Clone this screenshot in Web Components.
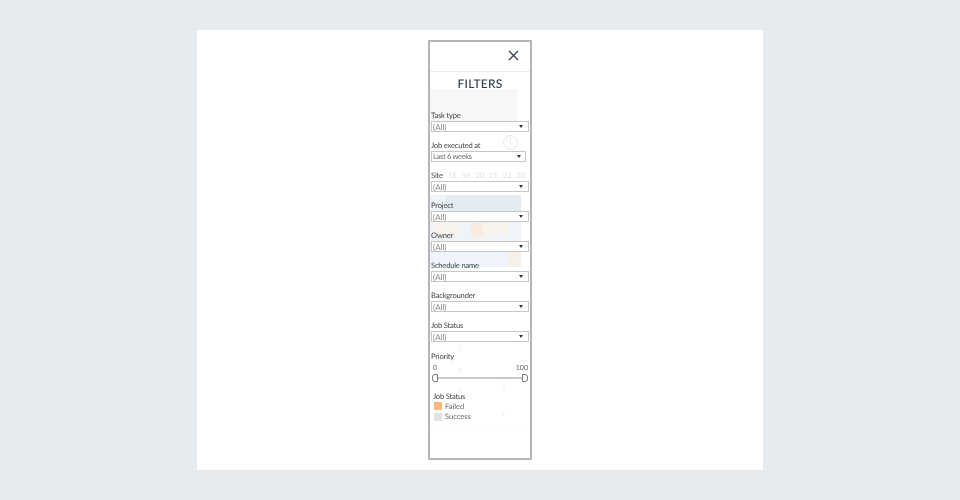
<!DOCTYPE html>
<html>
<head>
<meta charset="utf-8">
<style>
  html, body { margin: 0; height: 500px; overflow: hidden; background: #e6ebef; }
  body { font-family: Lato, "Open Sans", sans-serif; text-rendering: geometricPrecision; }
</style>
</head>
<body>
<dash-page>
  <filter-panel>
    <filter-select label="Task type" value="(All)"></filter-select>
    <filter-select label="Job executed at" value="Last 6 weeks" narrow></filter-select>
    <filter-select label="Site" value="(All)"></filter-select>
    <filter-select label="Project" value="(All)"></filter-select>
    <filter-select label="Owner" value="(All)"></filter-select>
    <filter-select label="Schedule name" value="(All)"></filter-select>
    <filter-select label="Backgrounder" value="(All)"></filter-select>
    <filter-select label="Job Status" value="(All)"></filter-select>
    <range-filter label="Priority" min="0" max="100"></range-filter>
    <status-legend title="Job Status"></status-legend>
  </filter-panel>
</dash-page>

<script>
class DashPage extends HTMLElement {
  constructor() {
    super();
    this.attachShadow({ mode: 'open' });
    this.shadowRoot.innerHTML = `
      <style>
        :host { display: flex; justify-content: center; padding: 30px 0; height: 440px; }
        .sheet { width: 566px; height: 440px; background: #fff; display: flex; justify-content: center; padding-top: 10px; box-sizing: border-box; }
      </style>
      <div class="sheet"><slot></slot></div>
    `;
  }
}

class FilterPanel extends HTMLElement {
  constructor() {
    super();
    this.attachShadow({ mode: 'open' });
    this.shadowRoot.innerHTML = `
      <style>
        :host { display: block; position: relative; width: 104px; height: 420px; box-sizing: border-box; border: 2px solid #b4b6b8; background: #fff; overflow: hidden; }
        .wrap { filter: blur(0.3px); height: 100%; }
        .head { height: 30px; border-bottom: 1px solid #ededed; display: flex; justify-content: flex-end; align-items: center; padding: 0 11px 2px 0; box-sizing: border-box; }
        .title { text-align: center; font-size: 12px; font-weight: 500; line-height: 15px; color: #2f3d4c; letter-spacing: .2px; padding-top: 4px; position: relative; }
        .list { position: relative; display: flex; flex-direction: column; gap: 10px; padding: 0 1px; margin-top: 19px; }
        /* faded chart showing through behind the filters */
        .ghost { position: absolute; }
        .days { position: absolute; left: 18px; top: 129px; display: flex; gap: 5px; font-size: 7.5px; line-height: 10px; color: #e2e2e2; }
        .info { position: absolute; left: 73px; top: 93px; width: 13px; height: 13px; border: 1px solid #e4e4e4; border-radius: 50%; color: #e4e4e4; font-size: 10px; line-height: 13px; text-align: center; }
      </style>
      <div class="wrap">
        <div class="ghost" style="left:0;top:47px;width:88px;height:33px;background:#f7f7f7"></div>
        <div class="ghost" style="left:0;top:153px;width:91px;height:72px;background:#eef4f9"></div>
        <div class="ghost" style="left:16px;top:153px;width:75px;height:20px;background:#e3ebf3"></div>
        <div class="ghost" style="left:4px;top:181px;width:25px;height:14px;background:#f8f2ed"></div>
        <div class="ghost" style="left:41px;top:181px;width:12px;height:14px;background:#f9ebe0"></div>
        <div class="ghost" style="left:53px;top:181px;width:25px;height:14px;background:#f8f2ed"></div>
        <div class="ghost" style="left:78px;top:210px;width:13px;height:15px;background:#f6f0ea"></div>
        <div class="ghost" style="left:28px;top:303px;width:4px;height:7px;background:#f8f8f8"></div>
        <div class="ghost" style="left:28px;top:326px;width:4px;height:5px;background:#f8f8f8"></div>
        <div class="ghost" style="left:28px;top:346px;width:4px;height:6px;background:#f8f8f8"></div>
        <div class="ghost" style="left:72px;top:341px;width:3px;height:7px;background:#f8f8f8"></div>
        <div class="ghost" style="left:72px;top:371px;width:3px;height:3px;background:#f6f6f6"></div>
        <div class="ghost" style="left:0;top:384px;width:91px;height:1px;background:#fafafa"></div>
        <div class="days"><span>18</span><span>19</span><span>20</span><span>21</span><span>22</span><span>23</span></div>
        <div class="info">i</div>
        <div class="head">
          <svg width="11" height="11" viewBox="0 0 11 11"><path d="M1 1l9 9M10 1l-9 9" stroke="#333f4d" stroke-width="1.3" fill="none"/></svg>
        </div>
        <div class="title">FILTERS</div>
        <div class="list"><slot></slot></div>
      </div>
    `;
  }
}

class FilterSelect extends HTMLElement {
  constructor() {
    super();
    this.attachShadow({ mode: 'open' });
  }
  connectedCallback() {
    const narrow = this.hasAttribute('narrow');
    this.shadowRoot.innerHTML = `
      <style>
        :host { display: block; height: 20px; }
        label { display: block; font-size: 7.6px; letter-spacing: -.2px; line-height: 10px; height: 9px; color: #3f444a; white-space: nowrap; }
        .box { display: flex; justify-content: space-between; align-items: center; height: 11px; box-sizing: border-box; border: 1px solid #c4c6c8; background: #fff; padding: 0 5px 0 1px; margin-top: 2px; font-size: 8px; color: #808080; ${narrow ? 'margin-right: 3px; padding-right: 4px; font-size: 7.5px; letter-spacing: -.3px; color: #6c6c6c;' : ''} }
        .arrow { width: 0; height: 0; border-left: 2px solid transparent; border-right: 2px solid transparent; border-top: 3px solid #333; }
      </style>
      <label>${this.getAttribute('label')}</label>
      <div class="box"><span>${this.getAttribute('value')}</span><span class="arrow"></span></div>
    `;
  }
}

class RangeFilter extends HTMLElement {
  constructor() {
    super();
    this.attachShadow({ mode: 'open' });
  }
  connectedCallback() {
    this.shadowRoot.innerHTML = `
      <style>
        :host { display: block; height: 30px; margin-top: 1px; }
        label { display: block; font-size: 7.6px; letter-spacing: -.2px; line-height: 10px; color: #3f444a; }
        .nums { display: flex; justify-content: space-between; font-size: 7px; line-height: 9px; color: #666; padding: 3px 1px 0 2px; }
        .track { display: flex; align-items: center; margin: 1px 1px 0 1px; height: 8px; }
        .knob { width: 4px; height: 6px; border: 1px solid #777; background: #fff; }
        .knob.l { border-radius: 3px 0 0 3px; }
        .knob.r { border-radius: 0 3px 3px 0; }
        .line { flex: 1; height: 2px; background: #c9c9c9; }
      </style>
      <label>${this.getAttribute('label')}</label>
      <div class="nums"><span>${this.getAttribute('min')}</span><span>${this.getAttribute('max')}</span></div>
      <div class="track"><span class="knob l"></span><span class="line"></span><span class="knob r"></span></div>
    `;
  }
}

class StatusLegend extends HTMLElement {
  constructor() {
    super();
    this.attachShadow({ mode: 'open' });
  }
  connectedCallback() {
    this.shadowRoot.innerHTML = `
      <style>
        :host { display: block; padding-left: 2px; }
        .t { font-size: 7.6px; letter-spacing: -.2px; line-height: 10px; color: #3f444a; }
        .row { display: flex; align-items: center; gap: 3px; height: 10.5px; font-size: 7.5px; color: #666; padding-left: 1px; }
        i { width: 8px; height: 8px; display: block; }
      </style>
      <div class="t">${this.getAttribute('title')}</div>
      <div class="row"><i style="background:#f7b97c"></i>Failed</div>
      <div class="row"><i style="background:#e3e3e3"></i>Success</div>
    `;
  }
}

customElements.define('dash-page', DashPage);
customElements.define('filter-panel', FilterPanel);
customElements.define('filter-select', FilterSelect);
customElements.define('range-filter', RangeFilter);
customElements.define('status-legend', StatusLegend);
</script>
</body>
</html>
